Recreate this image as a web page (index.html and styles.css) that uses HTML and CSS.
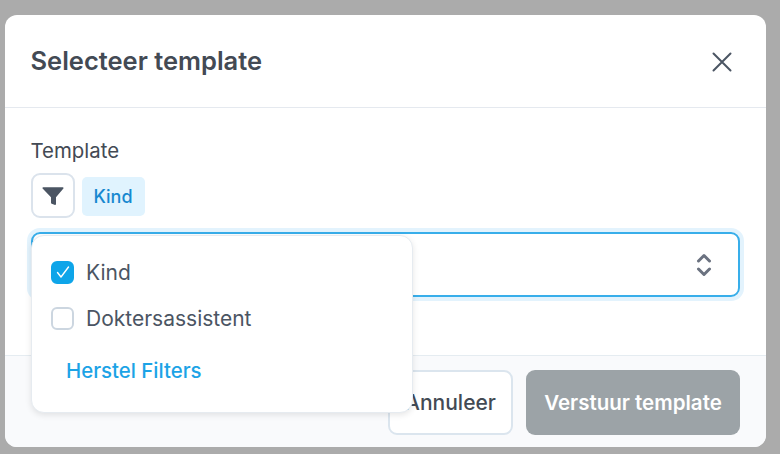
FILE: index.html
```html
<!DOCTYPE html>
<html lang="nl">
<head>
<meta charset="utf-8">
<title>Selecteer template</title>
<link rel="stylesheet" href="styles.css">
</head>
<body>
<div class="modal">
  <header class="modal-header">
    <h1 class="modal-title">Selecteer template</h1>
    <button class="close" aria-label="Sluiten">
      <svg width="22" height="22" viewBox="0 0 22 22" fill="none" stroke="#4b5563" stroke-width="2" stroke-linecap="round"><path d="M2.500 2.500l17 17M19.500 2.500l-17 17"/></svg>
    </button>
  </header>
  <section class="modal-body">
    <div class="label">Template</div>
    <div class="filter-row">
      <button class="filter-btn" aria-label="Filter">
        <svg width="22" height="22" viewBox="0 0 22 22" fill="#4b5563"><path d="M1.2 2.2h19.600c.7 0 1 .8.6 1.300L14 12.200v6.900c0 .6-.5 1-1 .9l-3.200-1.200c-.5-.2-.8-.6-.8-1.100v-5.500L.6 3.500c-.4-.5-.1-1.300.6-1.300z"/></svg>
      </button>
      <span class="tag">Kind</span>
    </div>
    <div class="select">
      <svg width="16" height="26" viewBox="0 0 16 26" fill="none" stroke="#6b7280" stroke-width="3" stroke-linecap="round" stroke-linejoin="round"><path d="M2.500 9L8 3.500 13.500 9M2.500 17L8 22.500 13.500 17"/></svg>
    </div>
    <div class="popover">
      <label class="option"><span class="check checked"><svg width="16" height="16" viewBox="0 0 16 16" fill="none" stroke="#fff" stroke-width="1.400" stroke-linecap="round" stroke-linejoin="round"><path d="M2.500 8.500l3.500 4.500 7.500-10"/></svg></span>Kind</label>
      <label class="option"><span class="check"></span>Doktersassistent</label>
      <a class="reset">Herstel Filters</a>
    </div>
  </section>
  <footer class="modal-footer">
    <button class="btn btn-cancel">Annuleer</button>
    <button class="btn btn-send">Verstuur template</button>
  </footer>
</div>
</body>
</html>
```
FILE: styles.css
```css
* { box-sizing: border-box; }
html, body { margin: 0; height: 100%; }
body {
  width: 780px;
  height: 454px;
  overflow: hidden;
  background: #ababab;
  padding: 15px 14px 7px 5px;
  font-family: Inter, "Liberation Sans", sans-serif;
  color: #4b5563;
}
.modal {
  height: 432px;
  background: #fff;
  border-radius: 12px;
  overflow: hidden;
  display: flex;
  flex-direction: column;
}
.modal-header {
  height: 93px;
  flex: none;
  display: flex;
  align-items: center;
  justify-content: space-between;
  padding: 0 33px 0 25.500px;
  border-bottom: 1px solid #e5e9ef;
}
.modal-title { margin: 0 0 2px; font-size: 25.500px; font-weight: 600; color: #434a54; }
.close { border: 0; background: none; padding: 0; display: flex; margin-top: 1px; }
.modal-body {
  position: relative;
  flex: 1;
  padding: 31px 26px 0 25.500px;
}
.label { font-size: 20.400px; line-height: 23px; color: #434a54; }
.filter-row { display: flex; align-items: center; gap: 7px; margin-top: 11px; }
.filter-btn {
  width: 44px;
  height: 45px;
  background: #fff;
  border: 2px solid #dbe3ec;
  border-radius: 9px;
  display: flex;
  align-items: center;
  justify-content: center;
  padding: 0;
}
.tag {
  width: 63px;
  height: 39px;
  margin-top: 2px;
  background: #e0f3fe;
  border-radius: 5px;
  color: #1788d0;
  font-size: 18px;
  font-weight: 500;
  display: flex;
  align-items: center;
  justify-content: center;
}
.select {
  margin-top: 14px;
  height: 65px;
  border: 2px solid #38aeea;
  border-radius: 9px;
  box-shadow: 0 0 0 4px #e3f3fd;
  display: flex;
  align-items: center;
  justify-content: flex-end;
  padding-right: 26px;
}
.popover {
  position: absolute;
  left: 26px;
  top: 127px;
  width: 382px;
  height: 178px;
  background: #fff;
  border: 1px solid #e6ebf0;
  border-radius: 13px;
  box-shadow: 0 2px 6px rgba(0, 0, 0, .1);
  padding: 25px 19px 0;
  display: flex;
  flex-direction: column;
}
.option { display: flex; align-items: center; gap: 12px; height: 22px; margin-bottom: 24px; font-size: 21px; color: #4b5563; }
.check {
  width: 23px;
  height: 23px;
  flex: none;
  border: 2px solid #ccd6e0;
  border-radius: 6px;
  background: #fff;
  display: flex;
  align-items: center;
  justify-content: center;
}
.check.checked { background: #0ea5e9; border-color: #0ea5e9; }
.reset { margin: 6px 0 0 15px; font-size: 20.400px; font-weight: 500; line-height: 24px; color: #1ca3e6; }
.modal-footer {
  height: 92px;
  flex: none;
  background: #f9fafc;
  border-top: 1px solid #e5ecf1;
  display: flex;
  align-items: center;
  justify-content: flex-end;
  gap: 13px;
  padding: 2px 26px 0;
}
.btn { height: 65px; border-radius: 9px; font-family: inherit; font-size: 20.500px; font-weight: 500; padding: 0; }
.btn-cancel { width: 125px; background: #fff; border: 2px solid #dbe5ee; color: #434a54; font-size: 21px; }
.btn-send { width: 214px; background: #9ca3a7; border: 0; color: #fff; font-weight: 600; }
```
